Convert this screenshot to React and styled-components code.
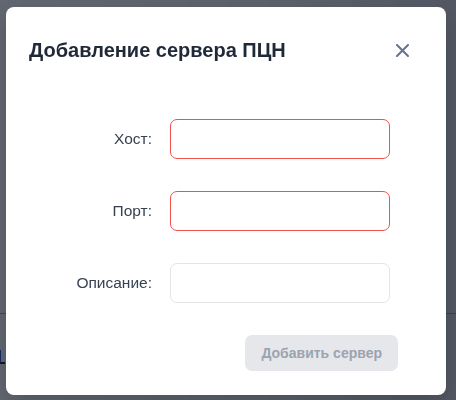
import React from "react";
import styled, { createGlobalStyle } from "styled-components";

const GlobalStyle = createGlobalStyle`
  html, body { margin: 0; padding: 0; }
  body {
    font-family: "Liberation Sans", Arial, sans-serif;
    background: #ffffff;
    overflow: hidden;
  }
`;

const Page = styled.div`
  width: 456px;
  height: 400px;
  background: linear-gradient(90deg, #ffffff 0%, #ffffff 60%, #eceef1 100%);
  overflow: hidden;
  display: flex;
  flex-direction: column;
`;

const PageRow = styled.div`
  height: ${(p) => p.$h}px;
  display: flex;
  align-items: ${(p) => p.$align || "center"};
  justify-content: ${(p) => p.$justify || "space-between"};
  font-size: 15px;
  color: #374151;
  border-bottom: ${(p) => (p.$rule ? "1px solid #9ca3af" : "none")};
  box-sizing: border-box;
`;

const CutLeft = styled.span`
  margin-left: -40px;
  white-space: nowrap;
`;

const CutRight = styled.span`
  margin-right: -40px;
  white-space: nowrap;
`;

const LinkMark = styled.span`
  width: 6px;
  height: 14px;
  border-left: 2px solid #1d4ed8;
  border-bottom: 2px solid #111827;
  box-sizing: border-box;
  margin-left: -1px;
`;

const Overlay = styled.div`
  position: fixed;
  inset: 0;
  background: linear-gradient(90deg, rgba(17, 24, 39, 0.66), rgba(17, 24, 39, 0.7));
  display: flex;
  align-items: flex-start;
  justify-content: flex-start;
  padding: 7px 10px 5px 6px;
`;

const Modal = styled.div`
  width: 440px;
  box-sizing: border-box;
  background: #ffffff;
  border-radius: 8px;
  box-shadow: 0 10px 25px rgba(0, 0, 0, 0.18);
  padding: 29px 32px 24px 23px;
  display: flex;
  flex-direction: column;
`;

const Header = styled.div`
  display: flex;
  align-items: center;
  justify-content: space-between;
  height: 28px;
`;

const Title = styled.h2`
  margin: 0;
  font-size: 20px;
  line-height: 28px;
  font-weight: 700;
  color: #1f2937;
`;

const CloseButton = styled.button`
  width: 24px;
  height: 24px;
  padding: 0;
  border: none;
  background: transparent;
  color: #64748b;
  display: flex;
  align-items: center;
  justify-content: center;
  cursor: pointer;
`;

const Form = styled.div`
  margin-top: 55px;
  display: grid;
  grid-template-columns: 123px 220px;
  column-gap: 18px;
  row-gap: 32px;
  align-items: center;
`;

const Label = styled.label`
  text-align: right;
  font-size: 15.5px;
  color: #374151;
`;

const Input = styled.input`
  width: 220px;
  height: 40px;
  box-sizing: border-box;
  border: 1px solid ${(p) => (p.$invalid ? "#f0524a" : "#e2e4e8")};
  border-radius: 7px;
  background: #ffffff;
  outline: none;
  padding: 0 12px;
  font-family: inherit;
  font-size: 15px;
`;

const Footer = styled.div`
  margin-top: 32px;
  margin-right: 16px;
  display: flex;
  justify-content: flex-end;
`;

const SubmitButton = styled.button`
  height: 36px;
  padding: 0 16px;
  border: none;
  border-radius: 7px;
  background: #e5e7eb;
  color: #9ca3af;
  font-family: inherit;
  font-size: 14px;
  font-weight: 700;
  cursor: not-allowed;
`;

export default function App() {
  return (
    <>
      <GlobalStyle />
      <Page>
        <PageRow $h={80} />
        <PageRow $h={20}>
          <CutLeft>сту</CutLeft>
        </PageRow>
        <PageRow $h={130} />
        <PageRow $h={20} $justify="flex-end">
          <CutRight>ке</CutRight>
        </PageRow>
        <PageRow $h={64} $rule />
        <PageRow $h={50} $align="flex-end">
          <LinkMark />
        </PageRow>
      </Page>
      <Overlay>
        <Modal>
          <Header>
            <Title>Добавление сервера ПЦН</Title>
            <CloseButton aria-label="Закрыть">
              <svg width="13" height="13" viewBox="0 0 13 13" fill="none">
                <path
                  d="M1 1L12 12M12 1L1 12"
                  stroke="currentColor"
                  strokeWidth="2"
                  strokeLinecap="round"
                />
              </svg>
            </CloseButton>
          </Header>
          <Form>
            <Label htmlFor="host">Хост:</Label>
            <Input id="host" $invalid />
            <Label htmlFor="port">Порт:</Label>
            <Input id="port" $invalid />
            <Label htmlFor="desc">Описание:</Label>
            <Input id="desc" />
          </Form>
          <Footer>
            <SubmitButton disabled>Добавить сервер</SubmitButton>
          </Footer>
        </Modal>
      </Overlay>
    </>
  );
}
